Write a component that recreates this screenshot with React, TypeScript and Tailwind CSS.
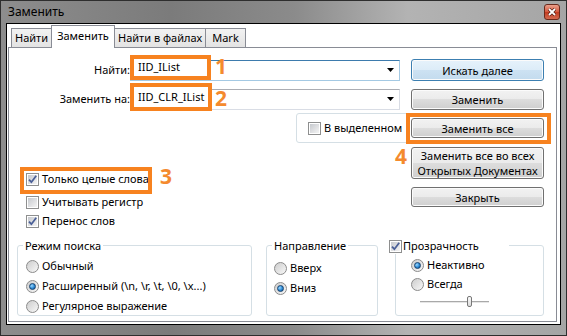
import React from "react";

const Check = ({ checked = false }: { checked?: boolean }) => (
  <span className="flex h-[13px] w-[13px] shrink-0 items-center justify-center border border-[#8e8f8f] bg-white">
    <span className="flex h-[9px] w-[9px] items-center justify-center bg-[linear-gradient(135deg,#c6c9ce,#f4f4f4)]">
      {checked && (
        <svg width="9" height="9" viewBox="0 0 9 9" className="overflow-visible">
          <path d="M1 4.6 L3.4 7.2 L8.2 0.8" fill="none" stroke="#4a5f97" strokeWidth="1.8" />
        </svg>
      )}
    </span>
  </span>
);

const Radio = ({ checked = false }: { checked?: boolean }) => (
  <span className="flex h-[13px] w-[13px] shrink-0 items-center justify-center rounded-full border border-[#8b8b8b] bg-[linear-gradient(135deg,#cdcdcd,#f8f8f8)]">
    {checked && (
      <span className="h-[7px] w-[7px] rounded-full border border-[#16426f] bg-[radial-gradient(circle_at_35%_35%,#9bd8ff,#2b89d4_55%,#0f4b88)]" />
    )}
  </span>
);

const Opt = ({
  label,
  checked = false,
  radio = false,
  className = "",
}: {
  label: string;
  checked?: boolean;
  radio?: boolean;
  className?: string;
}) => (
  <div className={`flex items-center gap-[3px] ${className}`}>
    {radio ? <Radio checked={checked} /> : <Check checked={checked} />}
    <span className="whitespace-nowrap">{label}</span>
  </div>
);

const Btn = ({
  children,
  primary = false,
  className = "",
}: {
  children: React.ReactNode;
  primary?: boolean;
  className?: string;
}) => (
  <div
    className={`flex shrink-0 items-center justify-center whitespace-nowrap rounded-[3px] border text-center leading-[15px] shadow-[inset_0_0_0_1px_#fbfbfb] ${
      primary
        ? "border-[#3c7fb1] bg-[linear-gradient(#e6f2fb,#dcecf8_50%,#cde2f3_50%,#c3dbee)]"
        : "border-[#707070] bg-[linear-gradient(#f2f2f2,#ebebeb_50%,#dddddd_50%,#cfcfcf)]"
    } ${className}`}
  >
    <span>{children}</span>
  </div>
);

const Combo = ({ focused = false }: { focused?: boolean }) => (
  <div
    className={`flex h-[21px] w-[270px] items-center justify-end border bg-white pr-[5px] ${
      focused ? "border-[#a4c9e3] border-t-[#3d7bad]" : "border-[#d9dde5] border-t-[#abadb3]"
    }`}
  >
    <svg width="7" height="4" viewBox="0 0 7 4">
      <path d="M0 0H7L3.5 4Z" fill="#000" />
    </svg>
  </div>
);

const Tab = ({ label, active = false, className = "" }: { label: string; active?: boolean; className?: string }) => (
  <div
    className={`flex items-center justify-center whitespace-nowrap border border-b-0 border-[#898c95] ${
      active
        ? "relative z-10 -mb-px h-[23px] bg-white pb-[2px]"
        : "h-[19px] bg-[linear-gradient(#f2f2f2,#e3e3e3)]"
    } ${className}`}
  >
    {label}
  </div>
);

export default function App() {
  return (
    <div className="flex h-[336px] w-[567px] flex-col border border-[#2e2e2e] bg-[linear-gradient(90deg,#8d8d8d_0%,#7b7b7b_30%,#8b8b8b_52%,#b3b3b3_72%,#a5a5a5_100%)] font-['Noto_Sans',sans-serif] text-[11px] text-black">
      {/* title bar */}
      <div className="flex h-[22px] items-center justify-between pl-[7px] pr-[6px]">
        <span className="text-[12px]">Заменить</span>
        <div className="flex h-[16px] w-[16px] items-center justify-center rounded-[3px] border border-[#6b2a1c] bg-[linear-gradient(#eba08c,#d4573d_50%,#c13a1f_50%,#d36a50)]">
          <svg width="8" height="8" viewBox="0 0 8 8">
            <path d="M1 1L7 7M7 1L1 7" stroke="#4a1a10" strokeWidth="3.2" />
            <path d="M1 1L7 7M7 1L1 7" stroke="#fff" strokeWidth="1.8" />
          </svg>
        </div>
      </div>

      {/* client */}
      <div className="mx-[5px] mb-[10px] flex flex-1 flex-col border border-black bg-white pb-[2px] pl-px pr-[3px]">
        <div className="relative z-10 flex h-[23px] items-end pl-[3px]">
          <Tab label="Найти" className="w-[41px]" />
          <Tab label="Заменить" active className="-ml-px w-[64px]" />
          <Tab label="Найти в файлах" className="-ml-px w-[92px]" />
          <Tab label="Mark" className="-ml-px w-[41px]" />
        </div>

        <div className="relative flex flex-1 flex-col border border-[#898c95] bg-white">
          <div className="mt-[11px] flex h-[22px] items-center">
            <span className="w-[121px] text-right">Найти:</span>
            <Combo focused />
            <Btn primary className="ml-[11px] h-[22px] w-[133px]">Искать далее</Btn>
          </div>
          <div className="mt-[7px] flex h-[22px] items-center">
            <span className="w-[121px] text-right">Заменить на:</span>
            <Combo />
            <Btn className="ml-[11px] h-[21px] w-[133px]">Заменить</Btn>
          </div>
          <div className="ml-[287px] mt-[3px] flex h-[30px] w-[253px] items-center justify-between rounded-[3px] border border-[#d5dfe5] pl-[11px] pr-[4px]">
            <Opt label="В выделенном" />
            <Btn className="h-[20px] w-[133px]">Заменить все</Btn>
          </div>
          <div className="mt-[4px] flex">
            <div className="flex flex-1 flex-col pl-[17px] pt-[26px]">
              <Opt checked label="Только целые слова" className="h-[13px]" />
              <Opt label="Учитывать регистр" className="mt-[10px] h-[13px]" />
              <Opt checked label="Перенос слов" className="mt-[6px] h-[13px]" />
            </div>
            <div className="mr-[12px] flex w-[133px] flex-col">
              <Btn className="h-[32px]">
                Заменить все во всех
                <br />
                Открытых Документах
              </Btn>
              <Btn className="mt-[8px] h-[20px]">Закрыть</Btn>
            </div>
          </div>

          <div className="mt-[17px] flex pl-[8px]">
            <div className="relative h-[71px] w-[235px] rounded-[3px] border border-[#d5dfe5] pl-[8px] pt-[10px]">
              <span className="absolute -top-[8px] left-[5px] bg-white px-[2px] leading-[16px]">Режим поиска</span>
              <Opt radio label="Обычный" className="h-[20px]" />
              <Opt radio checked label="Расширенный (\n, \r, \t, \0, \x...)" className="h-[20px]" />
              <Opt radio label="Регулярное выражение" className="h-[20px]" />
            </div>
            <div className="relative ml-[14px] h-[71px] w-[112px] rounded-[3px] border border-[#d5dfe5] pl-[7px] pt-[12px]">
              <span className="absolute -top-[8px] left-[5px] bg-white px-[2px] leading-[16px]">Направление</span>
              <Opt radio label="Вверх" className="h-[20px]" />
              <Opt radio checked label="Вниз" className="h-[20px]" />
            </div>
            <div className="relative ml-[17px] h-[71px] w-[149px] rounded-[3px] border border-[#d5dfe5] pl-[15px] pt-[10px]">
              <div className="absolute -top-[8px] -left-[7px] flex h-[16px] w-[120px] items-center gap-px bg-white">
                <Check checked />
                <span>Прозрачность</span>
              </div>
              <Opt radio checked label="Неактивно" className="h-[19px]" />
              <Opt radio label="Всегда" className="h-[19px]" />
              <div className="relative ml-[9px] flex h-[16px] w-[69px] items-center">
                <div className="h-[3px] w-full border-t border-b border-t-[#a9a9a9] border-b-white bg-[#e6e6e6]" />
                <div className="absolute left-[47px] top-[2px] h-[11px] w-[5px] rounded-[2px] border border-[#777] bg-[linear-gradient(#fafafa,#dcdcdc)]" />
              </div>
            </div>
          </div>

          {/* annotations */}
          <div className="absolute left-[121px] top-[7px] flex h-[25px] w-[81px] items-center border-4 border-[#f7821f] bg-white pl-[4px]">
            IID_IList
          </div>
          <div className="absolute left-[121px] top-[35px] flex h-[28px] w-[82px] items-center border-4 border-[#f7821f] bg-white pl-[4px]">
            IID_CLR_IList
          </div>
          <div className="absolute left-[11px] top-[119px] h-[27px] w-[132px] border-4 border-[#f7821f]" />
          <div className="absolute left-[397px] top-[65px] h-[31px] w-[145px] border-4 border-[#f7821f]" />
          <span className="absolute left-[206px] top-[8px] text-[21px] font-bold leading-none text-[#f48a2e]">1</span>
          <span className="absolute left-[206px] top-[40px] text-[21px] font-bold leading-none text-[#f48a2e]">2</span>
          <span className="absolute left-[151px] top-[118px] text-[21px] font-bold leading-none text-[#f48a2e]">3</span>
          <span className="absolute left-[386px] top-[98px] text-[21px] font-bold leading-none text-[#f48a2e]">4</span>
        </div>
      </div>
    </div>
  );
}
